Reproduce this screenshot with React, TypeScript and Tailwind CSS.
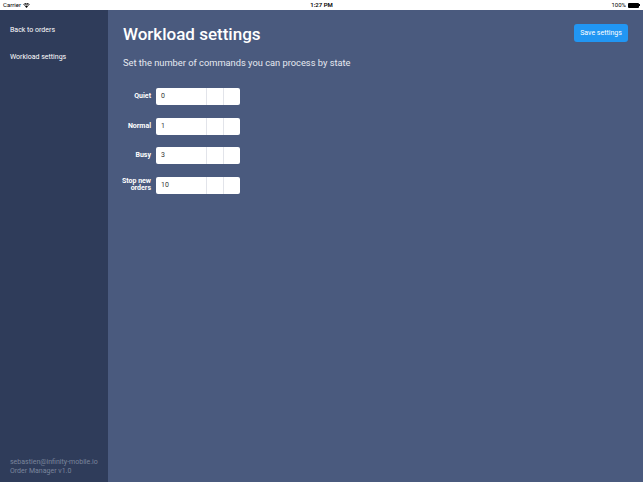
export default function App() {
  const rows = [
    { label: ["Quiet"], value: "0" },
    { label: ["Normal"], value: "1" },
    { label: ["Busy"], value: "3" },
    { label: ["Stop new", "orders"], value: "10" },
  ];

  return (
    <div className="flex h-[482px] w-[643px] flex-col overflow-hidden font-['Roboto',sans-serif]">
      {/* Status bar */}
      <div className="flex h-[10px] items-center justify-between bg-white px-[3px] text-[6px] leading-none text-black">
        <div className="flex w-[100px] items-center gap-[2px]">
          <span>Carrier</span>
          <svg width="7" height="5" viewBox="0 0 14 10">
            <path d="M7 10 L4 6.5 A4.5 4.5 0 0 1 10 6.5 Z" fill="#000" />
            <path d="M2.5 4.8 A6.5 6.5 0 0 1 11.5 4.8" stroke="#000" strokeWidth="1.6" fill="none" />
            <path d="M0.8 3 A9 9 0 0 1 13.2 3" stroke="#000" strokeWidth="1.6" fill="none" />
          </svg>
        </div>
        <span className="font-semibold">1:27 PM</span>
        <div className="flex w-[100px] items-center justify-end gap-[2px]">
          <span>100%</span>
          <div className="flex items-center">
            <div className="h-[5px] w-[11px] rounded-[1px] bg-black" />
            <div className="h-[2px] w-[1px] bg-black" />
          </div>
        </div>
      </div>

      <div className="flex flex-1">
        {/* Sidebar */}
        <aside className="flex w-[108px] flex-col justify-between bg-[#2f3c5a] px-[10px] pt-[15px] pb-[6px] text-[7px] text-white">
          <nav className="flex flex-col">
            <a className="leading-[10px]">Back to orders</a>
            <a className="mt-[17px] leading-[10px]">Workload settings</a>
          </nav>
          <div className="text-[7px] leading-[9px] text-[#7a859c]">
            <div>sebastien@infinity-mobile.io</div>
            <div>Order Manager v1.0</div>
          </div>
        </aside>

        {/* Main */}
        <main className="flex-1 bg-[#4a5a7e] pl-[15px] pr-[15px] pt-[13px] text-white">
          <div className="flex items-start justify-between">
            <h1 className="mt-[1px] text-[17px] font-medium leading-[20px]">Workload settings</h1>
            <button className="mt-[1px] h-[18px] w-[54px] rounded-[3px] bg-[#2196f3] text-[7px] text-white">
              Save settings
            </button>
          </div>
          <p className="mt-[13px] text-[9.3px] leading-[12px] text-[#e6e9f0]">
            Set the number of commands you can process by state
          </p>

          <div className="mt-[19px] flex flex-col gap-[12.6px]">
            {rows.map((r) => (
              <div key={r.value} className="flex items-center">
                <label className="flex w-[28px] flex-col items-end whitespace-nowrap text-right text-[7px] font-bold leading-[7px]">
                  {r.label.map((l) => (
                    <span key={l}>{l}</span>
                  ))}
                </label>
                <div className="ml-[5px] flex h-[17px] w-[84px] rounded-[2px] bg-white text-[7px] text-[#333]">
                  <div className="flex flex-1 items-center pl-[5px]">{r.value}</div>
                  <div className="w-[17px] border-l border-[#e2e4ea]" />
                  <div className="w-[17px] border-l border-[#e2e4ea]" />
                </div>
              </div>
            ))}
          </div>
        </main>
      </div>
    </div>
  );
}
